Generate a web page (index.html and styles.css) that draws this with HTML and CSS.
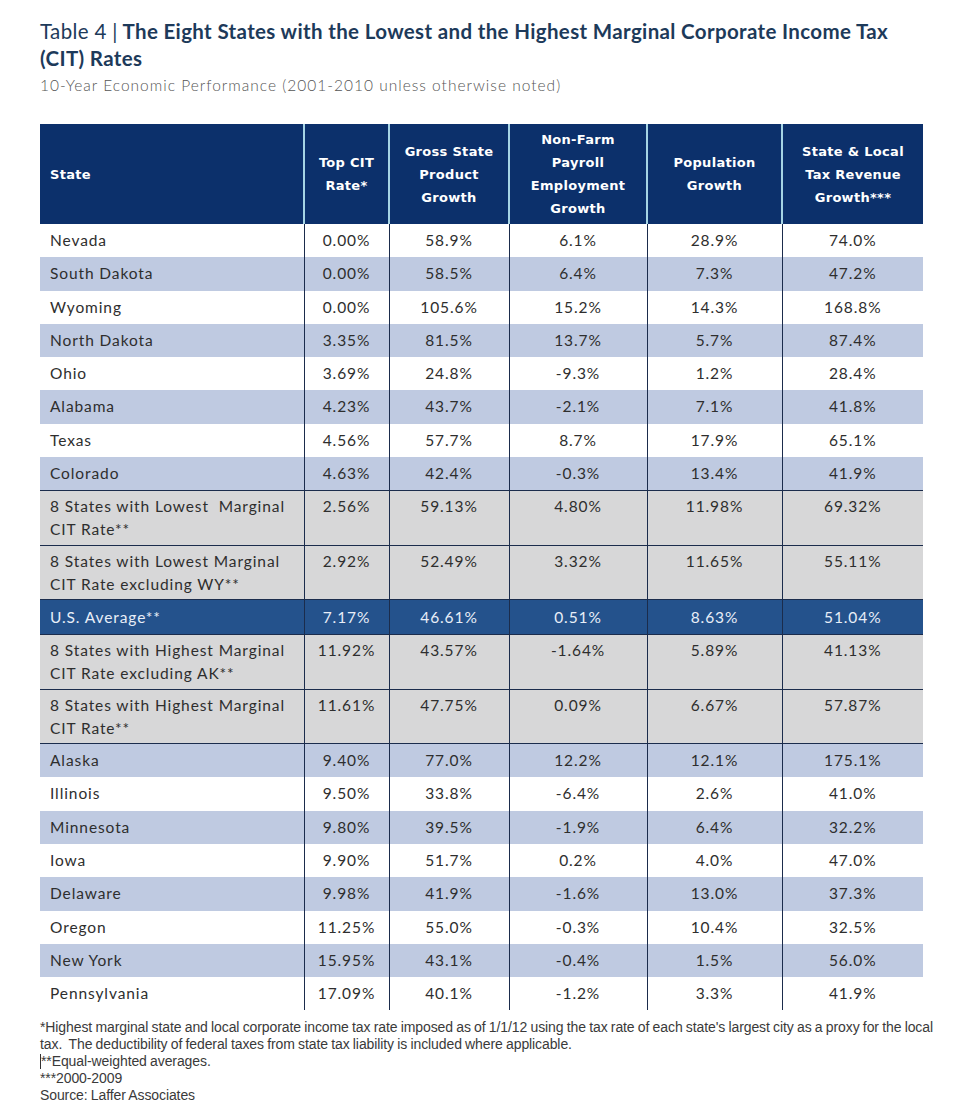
FILE: index.html
```html
<!DOCTYPE html>
<html lang="en">
<head>
<meta charset="utf-8">
<title>Table 4</title>
<link rel="stylesheet" href="styles.css">
</head>
<body>
<div class="page">
  <h1 class="title"><span class="title-num">Table 4 |</span> <span class="title-main">The Eight States with the Lowest and the Highest Marginal Corporate Income Tax (CIT) Rates</span></h1>
  <p class="subtitle">10-Year Economic Performance (2001-2010 unless otherwise noted)</p>

  <table class="data">
    <colgroup>
      <col class="c-state"><col class="c-rate"><col class="c-gsp"><col class="c-emp"><col class="c-pop"><col class="c-tax">
    </colgroup>
    <thead>
      <tr>
        <th class="th-state">State</th>
        <th>Top CIT<br>Rate*</th>
        <th>Gross State<br>Product<br>Growth</th>
        <th>Non-Farm<br>Payroll<br>Employment<br>Growth</th>
        <th>Population<br>Growth</th>
        <th>State &amp; Local<br>Tax Revenue<br>Growth***</th>
      </tr>
    </thead>
    <tbody>
      <tr class="r-white"><td>Nevada</td><td>0.00%</td><td>58.9%</td><td>6.1%</td><td>28.9%</td><td>74.0%</td></tr>
      <tr class="r-blue"><td>South Dakota</td><td>0.00%</td><td>58.5%</td><td>6.4%</td><td>7.3%</td><td>47.2%</td></tr>
      <tr class="r-white"><td>Wyoming</td><td>0.00%</td><td>105.6%</td><td>15.2%</td><td>14.3%</td><td>168.8%</td></tr>
      <tr class="r-blue"><td>North Dakota</td><td>3.35%</td><td>81.5%</td><td>13.7%</td><td>5.7%</td><td>87.4%</td></tr>
      <tr class="r-white"><td>Ohio</td><td>3.69%</td><td>24.8%</td><td>-9.3%</td><td>1.2%</td><td>28.4%</td></tr>
      <tr class="r-blue"><td>Alabama</td><td>4.23%</td><td>43.7%</td><td>-2.1%</td><td>7.1%</td><td>41.8%</td></tr>
      <tr class="r-white"><td>Texas</td><td>4.56%</td><td>57.7%</td><td>8.7%</td><td>17.9%</td><td>65.1%</td></tr>
      <tr class="r-blue"><td>Colorado</td><td>4.63%</td><td>42.4%</td><td>-0.3%</td><td>13.4%</td><td>41.9%</td></tr>
      <tr class="r-gray"><td>8 States with Lowest&nbsp; Marginal CIT Rate**</td><td>2.56%</td><td>59.13%</td><td>4.80%</td><td>11.98%</td><td>69.32%</td></tr>
      <tr class="r-gray"><td>8 States with Lowest Marginal CIT Rate excluding WY**</td><td>2.92%</td><td>52.49%</td><td>3.32%</td><td>11.65%</td><td>55.11%</td></tr>
      <tr class="r-avg"><td>U.S. Average**</td><td>7.17%</td><td>46.61%</td><td>0.51%</td><td>8.63%</td><td>51.04%</td></tr>
      <tr class="r-gray"><td>8 States with Highest Marginal CIT Rate excluding AK**</td><td>11.92%</td><td>43.57%</td><td>-1.64%</td><td>5.89%</td><td>41.13%</td></tr>
      <tr class="r-gray"><td>8 States with Highest Marginal CIT Rate**</td><td>11.61%</td><td>47.75%</td><td>0.09%</td><td>6.67%</td><td>57.87%</td></tr>
      <tr class="r-blue r-after"><td>Alaska</td><td>9.40%</td><td>77.0%</td><td>12.2%</td><td>12.1%</td><td>175.1%</td></tr>
      <tr class="r-white"><td>Illinois</td><td>9.50%</td><td>33.8%</td><td>-6.4%</td><td>2.6%</td><td>41.0%</td></tr>
      <tr class="r-blue"><td>Minnesota</td><td>9.80%</td><td>39.5%</td><td>-1.9%</td><td>6.4%</td><td>32.2%</td></tr>
      <tr class="r-white"><td>Iowa</td><td>9.90%</td><td>51.7%</td><td>0.2%</td><td>4.0%</td><td>47.0%</td></tr>
      <tr class="r-blue"><td>Delaware</td><td>9.98%</td><td>41.9%</td><td>-1.6%</td><td>13.0%</td><td>37.3%</td></tr>
      <tr class="r-white"><td>Oregon</td><td>11.25%</td><td>55.0%</td><td>-0.3%</td><td>10.4%</td><td>32.5%</td></tr>
      <tr class="r-blue"><td>New York</td><td>15.95%</td><td>43.1%</td><td>-0.4%</td><td>1.5%</td><td>56.0%</td></tr>
      <tr class="r-white"><td>Pennsylvania</td><td>17.09%</td><td>40.1%</td><td>-1.2%</td><td>3.3%</td><td>41.9%</td></tr>
    </tbody>
  </table>

  <div class="notes">
    <p>*Highest marginal state and local corporate income tax rate imposed as of 1/1/12 using the tax rate of each state's largest city as a proxy for the local<br>tax.&nbsp; The deductibility of federal taxes from state tax liability is included where applicable.</p>
    <p><span class="bar"></span>**Equal-weighted averages.</p>
    <p>***2000-2009</p>
    <p>Source: Laffer Associates</p>
  </div>
</div>
</body>
</html>
```

FILE: styles.css
```css
html, body {
  margin: 0;
  padding: 0;
  background: #ffffff;
}

.page {
  padding: 18px 40px 0 40px;
  font-family: Lato, "Open Sans", sans-serif;
  color: #2b2b2b;
}

.title {
  margin: 0;
  width: 850px;
  font-size: 20.5px;
  line-height: 27px;
  font-weight: 700;
  color: #1d3a5a;
  letter-spacing: 0.35px;
}

.title-num {
  font-weight: 400;
}

.title-main {
  font-weight: 700;
}

.subtitle {
  margin: 3px 0 0 0;
  font-size: 15.5px;
  line-height: 20px;
  font-weight: 300;
  color: #555555;
  letter-spacing: 1px;
}

.data {
  margin-top: 29px;
  width: 883px;
  border-collapse: collapse;
  table-layout: fixed;
}

.c-state { width: 264px; }
.c-rate { width: 85px; }
.c-gsp { width: 120px; }
.c-emp { width: 138px; }
.c-pop { width: 135px; }
.c-tax { width: 141px; }

.data th {
  background: #0c306b;
  color: #ffffff;
  font-family: "DejaVu Sans", Verdana, sans-serif;
  font-size: 13px;
  font-weight: 700;
  line-height: 23px;
  letter-spacing: 0.3px;
  text-align: center;
  vertical-align: middle;
  height: 100px;
  padding: 0 4px;
  border-left: 2px solid #a6d4e4;
}

.data th.th-state {
  text-align: left;
  padding-left: 10px;
  border-left: none;
}

.data td {
  font-size: 15.5px;
  line-height: 23px;
  font-weight: 400;
  letter-spacing: 0.9px;
  color: #2e2e2e;
  text-align: center;
  vertical-align: top;
  padding: 5px 4px 5px 4px;
  height: 23.3px;
  border-left: 1.5px solid #1b2c4c;
}

.data td:first-child {
  text-align: left;
  padding-left: 10px;
  border-left: none;
}

.r-white td { background: #ffffff; }
.r-blue td { background: #bfcae1; }

.r-gray td {
  background: #d7d7d8;
  height: 46px;
  padding-top: 4px;
  padding-bottom: 3.5px;
  border-top: 1.5px solid #1b2c4c;
}

.r-avg td {
  background: #24528c;
  color: #e8eef8;
  height: 23px;
  padding-top: 6px;
  padding-bottom: 5px;
  border-top: 1.5px solid #1b2c4c;
  border-bottom: 1.5px solid #1b2c4c;
}

.r-blue.r-after td {
  height: 23px;
  padding-top: 5px;
  padding-bottom: 5px;
  border-top: 1.5px solid #1b2c4c;
}

.notes {
  margin-top: 9px;
  font-family: "Liberation Sans", Arial, sans-serif;
  font-size: 14px;
  line-height: 16.8px;
  letter-spacing: -0.1px;
  word-spacing: -0.5px;
  color: #3a3a3a;
  width: 935px;
}

.notes p {
  margin: 0;
}

.bar {
  display: inline-block;
  width: 0;
  height: 15px;
  border-left: 1px solid #333;
  vertical-align: -3px;
}
```
